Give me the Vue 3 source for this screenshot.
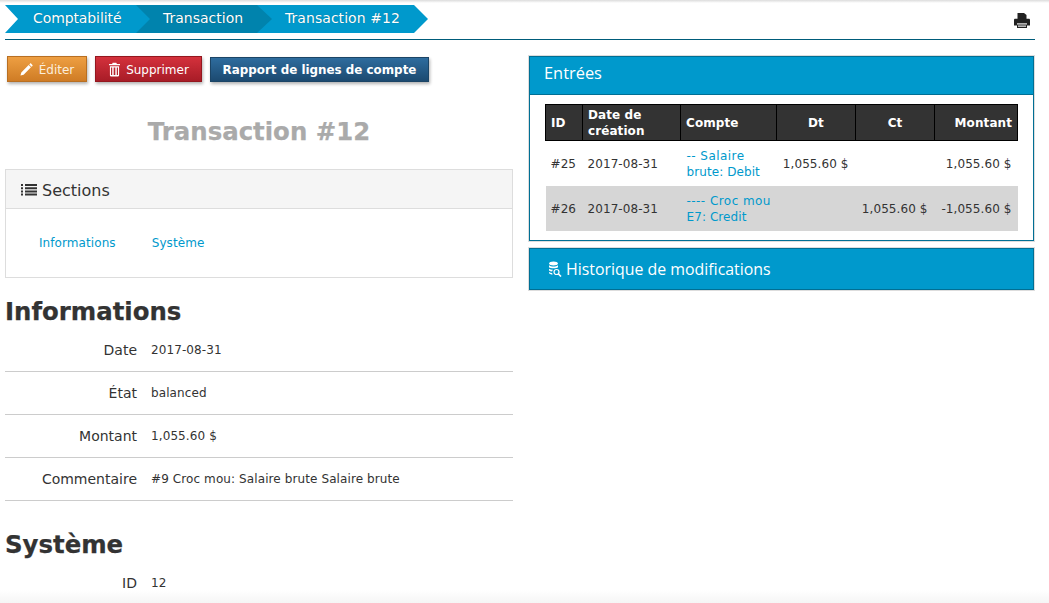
<script setup>
const info = [
  { label: 'Date', value: '2017-08-31' },
  { label: 'État', value: 'balanced' },
  { label: 'Montant', value: '1,055.60 $' },
  { label: 'Commentaire', value: '#9 Croc mou: Salaire brute Salaire brute' }
]
const entries = [
  { id: '#25', date: '2017-08-31', line1: '-- Salaire', line2: 'brute: Debit', dt: '1,055.60 $', ct: '', amount: '1,055.60 $' },
  { id: '#26', date: '2017-08-31', line1: '---- Croc mou', line2: 'E7: Credit', dt: '', ct: '1,055.60 $', amount: '-1,055.60 $' }
]
</script>

<template>
  <div class="page">
    <header class="topbar">
      <nav class="crumbs">
        <a class="crumb first">Comptabilité</a>
        <a class="crumb second">Transaction</a>
        <a class="crumb third">Transaction #12</a>
      </nav>
      <svg class="printer" viewBox="0 0 16 15" width="16" height="15" aria-label="Imprimer">
        <path fill="#222" d="M3.500 0h6.500l2.500 2v4h-9z" />
        <path fill="#222" d="M0 7c0-.8.500-1.300 1.300-1.300h13.400c.8 0 1.300.5 1.300 1.300v5.500h-3v2.500h-10v-2.500h-3z" />
        <path fill="#eee" d="M3 10.300h10v1.200h-10z" />
        <path fill="#ddd" d="M4 12.500h8v1.300h-8z" />
      </svg>
    </header>

    <main class="columns">
      <section class="left">
        <div class="actions">
          <button class="btn orange">
            <svg viewBox="0 0 14 14" width="13" height="13"><path fill="#fff" d="M.5 13.500l.9-3.400 7.900-7.900 2.500 2.500-7.900 7.900zM10 1.500l.9-.9c.3-.3.7-.3 1 0l1.500 1.500c.3.300.3.700 0 1l-.9.900z" /></svg>
            <span class="btn-text">Éditer</span>
          </button>
          <button class="btn red">
            <svg viewBox="0 0 12 15" width="11" height="15"><path fill="#fff" d="M4 0h4l.6 1.600H12v1.300H0V1.600h3.400zM1 4h10v9.800c0 .7-.4 1.200-1 1.200H2c-.6 0-1-.5-1-1.200zm1.200 1.300v8.200h1.300V5.300zm2.900 0v8.200h1.800V5.300zm3.400 0v8.200h1.300V5.300z" /></svg>
            <span class="btn-text">Supprimer</span>
          </button>
          <button class="btn blue">Rapport de lignes de compte</button>
        </div>

        <h1 class="title">Transaction #12</h1>

        <div class="sections">
          <div class="sections-head">
            <svg viewBox="0 0 16 14" width="16" height="14"><path fill="#333" d="M0 1h2v2H0zM4 1h12v2H4zM0 4.200h2v2H0zM4 4.200h12v2H4zM0 7.400h2v2H0zM4 7.400h12v2H4zM0 10.600h2v2H0zM4 10.600h12v2H4z" /></svg>
            Sections
          </div>
          <div class="sections-body">
            <a>Informations</a>
            <a>Système</a>
          </div>
        </div>

        <h2 class="heading">Informations</h2>
        <div v-for="row in info" :key="row.label" class="row">
          <span class="label">{{ row.label }}</span>
          <span class="value">{{ row.value }}</span>
        </div>

        <h2 class="heading system">Système</h2>
        <div class="row plain">
          <span class="label">ID</span>
          <span class="value">12</span>
        </div>
      </section>

      <aside class="right">
        <div class="panel">
          <div class="panel-head entries-head">Entrées</div>
          <div class="panel-body">
            <table>
              <thead>
                <tr>
                  <th class="c-id">ID</th>
                  <th class="c-date">Date de création</th>
                  <th class="c-account">Compte</th>
                  <th class="c-num center">Dt</th>
                  <th class="c-num center">Ct</th>
                  <th class="c-amount num">Montant</th>
                </tr>
              </thead>
              <tbody>
                <tr v-for="e in entries" :key="e.id">
                  <td>{{ e.id }}</td>
                  <td>{{ e.date }}</td>
                  <td class="account">
                    <a class="line first-line">{{ e.line1 }}</a>
                    <a class="line">{{ e.line2 }}</a>
                  </td>
                  <td class="num money">{{ e.dt }}</td>
                  <td class="num money">{{ e.ct }}</td>
                  <td class="num">{{ e.amount }}</td>
                </tr>
              </tbody>
            </table>
          </div>
        </div>

        <div class="panel history">
          <div class="panel-head history-head">
            <svg viewBox="0 0 14 16" width="14" height="16">
              <path fill="#fff" d="M1 2.500C1 1.200 3 .5 5.500.5S10 1.200 10 2.500 8 4.500 5.500 4.500 1 3.800 1 2.500zM1 4.300c1 .9 2.800 1.300 4.500 1.300s3.500-.4 4.500-1.300v1.900C9 7 7.500 7.300 5.500 7.300S2 7 1 6.200zM1 7.800c1 .7 2.600 1 4 1-.5.500-.8 1-.9 1.700C3 10.400 1.800 10 1 9.400zM1 11c.8.500 2 .9 3.100 1 .1.500.3 1 .6 1.400-1.800 0-3.700-.6-3.700-1.500z" />
              <circle cx="8.500" cy="11" r="2.500" fill="none" stroke="#fff" stroke-width="1.200" />
              <path stroke="#fff" stroke-width="1.600" d="M10.300 12.800l2.700 2.700" />
            </svg>
            Historique de modifications
          </div>
        </div>
      </aside>
    </main>

    <div class="fade-top"></div>
    <div class="fade-bottom"></div>
  </div>
</template>

<style>
html, body { margin: 0; background: #fff; overflow: hidden; }
</style>

<style scoped>
.page {
  position: relative;
  width: 1049px;
  height: 603px;
  overflow: hidden;
  box-sizing: border-box;
  padding: 5px 14px 0 5px;
  font-family: Verdana, "DejaVu Sans", sans-serif;
  color: #333;
  background: #fff;
}
.topbar {
  display: flex;
  justify-content: space-between;
  align-items: flex-start;
  height: 34px;
  border-bottom: 1px solid #005c7a;
}
.crumbs { display: flex; }
.crumb {
  display: block;
  box-sizing: border-box;
  height: 28px;
  line-height: 26px;
  font-size: 14px;
  color: #fff;
  text-shadow: 0 0 1px rgba(0, 0, 0, .35);
  background: #0099cc;
  white-space: nowrap;
}
.first {
  width: 145px;
  padding-left: 28px;
  letter-spacing: -.1px;
  clip-path: polygon(0 0, 131px 0, 145px 14px, 131px 28px, 0 28px, 13px 14px);
  position: relative;
  z-index: 3;
}
.second {
  width: 136px;
  margin-left: -14px;
  padding-left: 27px;
  background: #0083ad;
  clip-path: polygon(0 0, 121px 0, 136px 14px, 121px 28px, 0 28px);
  position: relative;
  z-index: 2;
}
.third {
  width: 171px;
  margin-left: -15px;
  padding-left: 28px;
  letter-spacing: .05px;
  clip-path: polygon(0 0, 157px 0, 171px 14px, 157px 28px, 0 28px);
}
.printer { margin: 8px 5px 0 0; }

.columns {
  display: grid;
  grid-template-columns: 508px 505px;
  column-gap: 16px;
  padding-top: 16px;
}
.actions {
  display: flex;
  gap: 8px;
  padding-left: 2px;
  height: 27px;
  align-items: flex-start;
}
.btn {
  display: flex;
  align-items: center;
  justify-content: center;
  gap: 6px;
  box-sizing: border-box;
  height: 26px;
  padding: 0;
  font-family: inherit;
  font-size: 12px;
  color: #fff;
  border: 1px solid;
  box-shadow: 1px 2px 3px rgba(0, 0, 0, .3);
}
.btn-text { padding-top: 1px; }
.orange {
  width: 80px;
  color: #fbeedd;
  background: linear-gradient(#ee9f42, #cf7c25);
  border-color: #b86f22;
}
.red {
  width: 107px;
  padding-left: 1px;
  background: linear-gradient(#d4313c, #a81c27);
  border-color: #94171f;
}
.blue {
  width: 219px;
  margin-top: 1px;
  height: 25px;
  font-size: 11.9px;
  font-weight: 700;
  background: linear-gradient(#2e6c9e, #1c4a70);
  border-color: #1c4566;
}
.title {
  margin: 36px 0 0;
  height: 26px;
  line-height: 26px;
  text-align: center;
  font-size: 24.4px;
  font-weight: 700;
  -webkit-text-stroke: .25px #aaa;
  color: #aaa;
}
.sections {
  margin-top: 24px;
  height: 109px;
  box-sizing: border-box;
  border: 1px solid #ddd;
}
.sections-head {
  display: flex;
  align-items: center;
  gap: 5px;
  height: 39px;
  padding: 2px 0 0 15px;
  box-sizing: border-box;
  font-size: 16px;
  background: #f5f5f5;
  border-bottom: 1px solid #ddd;
}
.sections-body {
  display: flex;
  gap: 36px;
  padding: 27px 0 0 33px;
  font-size: 12px;
  letter-spacing: .08px;
  line-height: 15px;
  color: #0099cc;
}
.heading {
  margin: 19px 0 0;
  height: 30px;
  line-height: 30px;
  font-size: 24.4px;
  font-weight: 700;
  -webkit-text-stroke: .25px #333;
  color: #333;
}
.system { margin-top: 29px; }
.row {
  display: flex;
  align-items: center;
  box-sizing: border-box;
  height: 43px;
  border-bottom: 1px solid #ccc;
}
.heading + .row { height: 43px; margin-top: 2px; }
.heading + .row.plain { border-bottom: 0; height: 28px; margin-top: 9px; }
.label {
  width: 132px;
  text-align: right;
  font-size: 14px;
}
.value {
  margin-left: 14px;
  font-size: 12px;
  letter-spacing: .1px;
}

.panel {
  box-sizing: border-box;
  height: 185px;
  border: 1px solid #006f94;
  box-shadow: 0 0 0 1px #ddd;
}
.panel-head {
  box-sizing: border-box;
  font-family: "Open Sans", sans-serif;
  color: #fff;
  background: #0099cc;
  border-bottom: 1px solid #006f94;
}
.entries-head {
  height: 38px;
  line-height: 32px;
  padding-left: 14px;
  font-size: 16.4px;
}
.panel-body { padding: 9px 15px 0; }
.history { height: 42px; margin-top: 7px; }
.history-head {
  display: flex;
  align-items: center;
  gap: 4px;
  height: 40px;
  padding-left: 18px;
  font-size: 15.9px;
  border-bottom: 0;
}
table {
  width: 472px;
  table-layout: fixed;
  border-collapse: collapse;
  font-size: 12px;
  letter-spacing: .08px;
}
th {
  height: 36px;
  box-sizing: border-box;
  padding: 0 5px;
  line-height: 16px;
  text-align: left;
  color: #fff;
  background: #333;
  border: 1px solid #000;
  font-weight: 700;
}
td {
  height: 45px;
  box-sizing: border-box;
  padding: 2px 0 0 5px;
  line-height: 16px;
}
tbody tr:nth-child(2) td { background: #d6d6d6; }
td.account { padding-left: 6px; }
.line { display: block; color: #0099cc; white-space: nowrap; }
.first-line { letter-spacing: .45px; }
.c-id { width: 37px; }
.c-date { width: 98px; }
.c-account { width: 96px; }
.c-num { width: 79px; }
.c-amount { width: 83px; }
.center { text-align: center; }
.num { text-align: right; }
th.num { padding-right: 5px; }
td.num { padding-right: 6px; white-space: nowrap; padding-left: 0; }
td.money { padding-right: 7px; }

.fade-top {
  position: absolute;
  inset: 0 0 auto 0;
  height: 3px;
  background: linear-gradient(#dcdcdc, #fff);
}
.fade-bottom {
  position: absolute;
  inset: auto 0 0 0;
  height: 13px;
  background: linear-gradient(rgba(245, 245, 245, 0), #f5f5f5);
}
</style>
